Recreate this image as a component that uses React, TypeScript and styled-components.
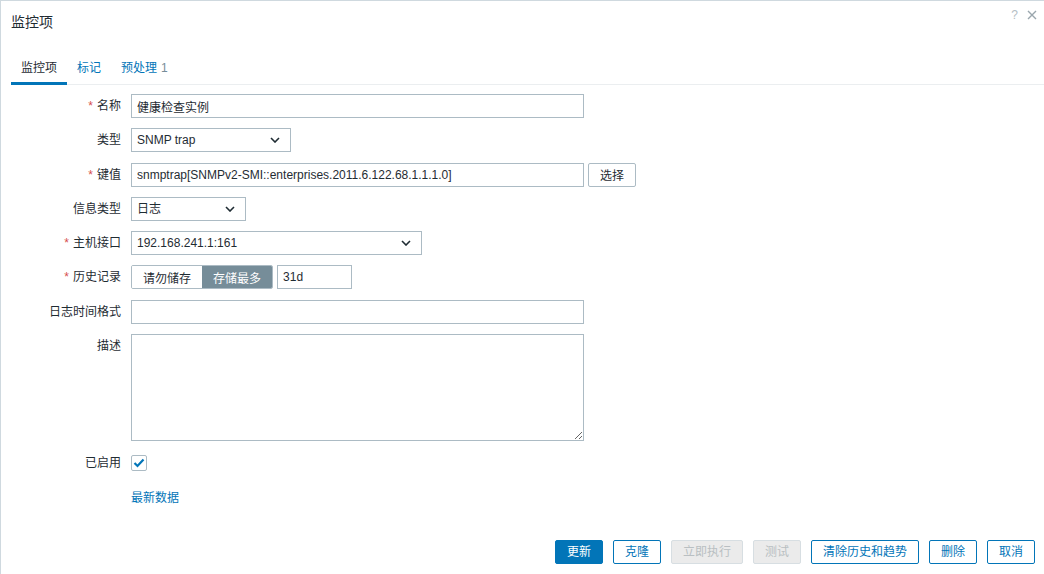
import * as React from "react";
import styled, { createGlobalStyle } from "styled-components";

const GlobalStyle = createGlobalStyle`
  html, body {
    margin: 0;
    padding: 0;
    background: #ffffff;
  }
  body {
    font-family: "Liberation Sans", Arial, "Noto Sans CJK SC", sans-serif;
    font-size: 12px;
    color: #1f2c33;
  }
  * { box-sizing: border-box; }
`;

const Dialog = styled.div`
  height: 574px;
  display: flex;
  flex-direction: column;
  border-top: 1px solid #cfd9df;
  border-left: 1px solid #cfd9df;
  background: #ffffff;
  position: relative;
`;

const Header = styled.div`
  height: 41px;
  padding: 13px 0 0 10px;
`;

const Title = styled.h4`
  margin: 0;
  font-size: 14px;
  font-weight: normal;
  line-height: 16px;
  color: #1f2c33;
`;

const HeaderIcons = styled.div`
  position: absolute;
  top: 6px;
  right: 6px;
  display: flex;
  align-items: center;
  gap: 8px;
`;

const HelpMark = styled.span`
  font-size: 12px;
  color: #b5bec4;
  line-height: 16px;
`;

const TabList = styled.div`
  display: flex;
  margin: 18px 0 0 10px;
  border-bottom: 1px solid #ebeef0;
`;

const Tab = styled.div<{ $active?: boolean }>`
  padding: 0 10px 6px;
  line-height: 16px;
  margin-bottom: -1px;
  border-bottom: 3px solid ${({ $active }) => ($active ? "#0275b8" : "transparent")};
  color: ${({ $active }) => ($active ? "#1f2c33" : "#0275b8")};
`;

const Count = styled.span`
  color: #768d99;
  margin-left: 4px;
`;

const Form = styled.div`
  display: grid;
  grid-template-columns: 111px 1fr;
  column-gap: 10px;
  row-gap: 10.3px;
  padding: 9px 0 0 9px;
`;

const Label = styled.label<{ $top?: boolean }>`
  display: flex;
  align-items: ${({ $top }) => ($top ? "flex-start" : "center")};
  justify-content: flex-end;
  min-height: 24px;
  padding-top: ${({ $top }) => ($top ? "4px" : "0")};
  line-height: 16px;
  white-space: nowrap;
`;

const Asterisk = styled.span`
  color: #d64e4e;
  margin-right: 4px;
`;

const Field = styled.div`
  display: flex;
  align-items: center;
  gap: 4px;
  min-height: 24px;
`;

const TextInput = styled.input<{ $w: number }>`
  width: ${({ $w }) => $w}px;
  height: 24px;
  padding: 0 5px;
  border: 1px solid #acbbc4;
  border-radius: 0;
  background: #ffffff;
  font: inherit;
  color: #1f2c33;
  outline: none;
`;

const SelectBox = styled.div<{ $w: number }>`
  width: ${({ $w }) => $w}px;
  height: 24px;
  padding: 0 10px 0 5px;
  border: 1px solid #acbbc4;
  background: #ffffff;
  display: flex;
  align-items: center;
  justify-content: space-between;
  line-height: 16px;
`;

const SmallButton = styled.button`
  height: 24px;
  padding: 0 11px;
  border: 1px solid #acbbc4;
  border-radius: 2px;
  background: #ffffff;
  font: inherit;
  color: #1f2c33;
`;

const Segments = styled.div`
  display: flex;
  height: 24px;
  border: 1px solid #acbbc4;
  border-radius: 2px;
  overflow: hidden;
`;

const Segment = styled.div<{ $on?: boolean }>`
  display: flex;
  align-items: center;
  padding: 0 11px;
  background: ${({ $on }) => ($on ? "#768d99" : "#ffffff")};
  color: ${({ $on }) => ($on ? "#ffffff" : "#1f2c33")};
`;

const TextArea = styled.textarea`
  width: 453px;
  height: 107px;
  border: 1px solid #acbbc4;
  padding: 4px 5px;
  font: inherit;
  resize: both;
  outline: none;
`;

const CheckBox = styled.span`
  width: 16px;
  height: 16px;
  border: 1px solid #acbbc4;
  border-radius: 2px;
  display: flex;
  align-items: center;
  justify-content: center;
`;

const Link = styled.a`
  color: #0275b8;
  text-decoration: none;
  line-height: 16px;
`;

const Footer = styled.div`
  margin-top: auto;
  display: flex;
  justify-content: flex-end;
  gap: 10px;
  padding: 0 9px 10px 0;
`;

type Variant = "primary" | "outline" | "disabled";

const FooterButton = styled.button<{ $variant: Variant }>`
  height: 24px;
  padding: 0 11px;
  border-radius: 2px;
  font: inherit;
  line-height: 16px;
  border: 1px solid
    ${({ $variant }) => ($variant === "disabled" ? "#d7dee2" : "#0275b8")};
  background: ${({ $variant }) =>
    $variant === "primary" ? "#0275b8" : $variant === "disabled" ? "#ebebeb" : "#ffffff"};
  color: ${({ $variant }) =>
    $variant === "primary" ? "#ffffff" : $variant === "disabled" ? "#b9bfc2" : "#0275b8"};
`;

const Chevron = () => (
  <svg width="10" height="6" viewBox="0 0 10 6">
    <path d="M1 1 L5 5 L9 1" fill="none" stroke="#1f2c33" strokeWidth="1.6" />
  </svg>
);

const Close = () => (
  <svg width="12" height="12" viewBox="0 0 12 12">
    <path d="M2 2 L10 10 M10 2 L2 10" stroke="#9aa6ad" strokeWidth="1.4" />
  </svg>
);

const Req = () => <Asterisk>*</Asterisk>;

export default function App() {
  return (
    <>
      <GlobalStyle />
      <Dialog>
        <Header>
          <Title>监控项</Title>
        </Header>
        <HeaderIcons>
          <HelpMark>?</HelpMark>
          <Close />
        </HeaderIcons>
        <TabList>
          <Tab $active>监控项</Tab>
          <Tab>标记</Tab>
          <Tab>
            预处理<Count>1</Count>
          </Tab>
        </TabList>
        <Form>
          <Label>
            <Req />名称
          </Label>
          <Field>
            <TextInput $w={453} defaultValue="健康检查实例" />
          </Field>

          <Label>类型</Label>
          <Field>
            <SelectBox $w={160}>
              SNMP trap
              <Chevron />
            </SelectBox>
          </Field>

          <Label>
            <Req />键值
          </Label>
          <Field>
            <TextInput
              $w={453}
              defaultValue="snmptrap[SNMPv2-SMI::enterprises.2011.6.122.68.1.1.1.0]"
            />
            <SmallButton>选择</SmallButton>
          </Field>

          <Label>信息类型</Label>
          <Field>
            <SelectBox $w={115}>
              日志
              <Chevron />
            </SelectBox>
          </Field>

          <Label>
            <Req />主机接口
          </Label>
          <Field>
            <SelectBox $w={291}>
              192.168.241.1:161
              <Chevron />
            </SelectBox>
          </Field>

          <Label>
            <Req />历史记录
          </Label>
          <Field>
            <Segments>
              <Segment>请勿储存</Segment>
              <Segment $on>存储最多</Segment>
            </Segments>
            <TextInput $w={75} defaultValue="31d" />
          </Field>

          <Label>日志时间格式</Label>
          <Field>
            <TextInput $w={453} defaultValue="" />
          </Field>

          <Label $top>描述</Label>
          <Field>
            <TextArea />
          </Field>

          <Label>已启用</Label>
          <Field>
            <CheckBox>
              <svg width="12" height="10" viewBox="0 0 12 10">
                <path d="M1.5 5 L4.5 8 L10.5 1.5" fill="none" stroke="#0275b8" strokeWidth="2.2" />
              </svg>
            </CheckBox>
          </Field>

          <span />
          <Field>
            <Link href="#">最新数据</Link>
          </Field>
        </Form>
        <Footer>
          <FooterButton $variant="primary">更新</FooterButton>
          <FooterButton $variant="outline">克隆</FooterButton>
          <FooterButton $variant="disabled">立即执行</FooterButton>
          <FooterButton $variant="disabled">测试</FooterButton>
          <FooterButton $variant="outline">清除历史和趋势</FooterButton>
          <FooterButton $variant="outline">删除</FooterButton>
          <FooterButton $variant="outline">取消</FooterButton>
        </Footer>
      </Dialog>
    </>
  );
}
